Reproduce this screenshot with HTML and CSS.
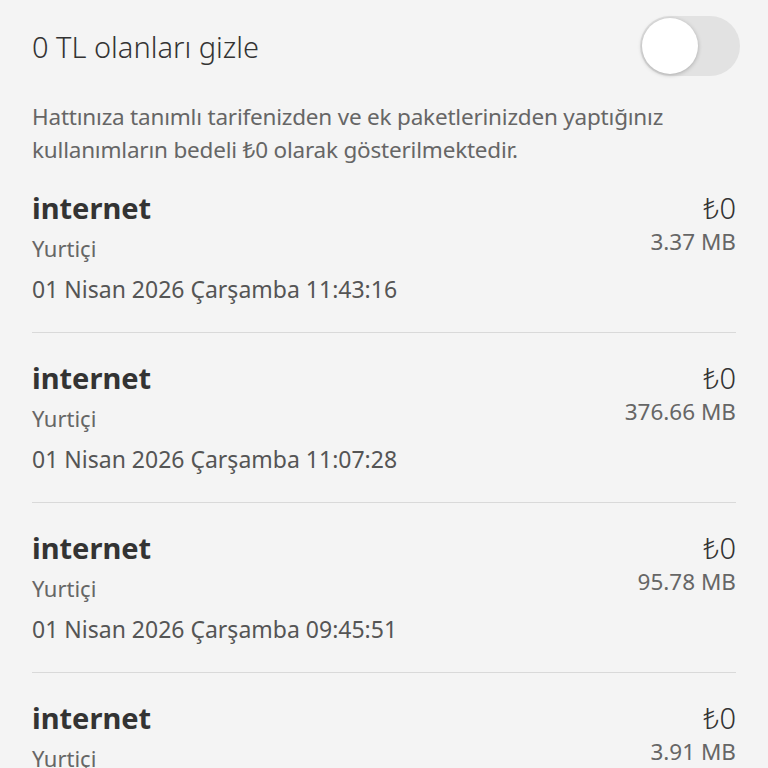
FILE: index.html
```html
<!DOCTYPE html>
<html lang="tr">
<head>
  <meta charset="UTF-8">
  <title>Kullanımlar</title>
  <link rel="stylesheet" href="styles.css">
</head>
<body>
<div class="page">
  <div class="filter">
    <span class="filter-title">0 TL olanları gizle</span>
    <span class="toggle"><span class="knob"></span></span>
  </div>
  <p class="note">Hattınıza tanımlı tarifenizden ve ek paketlerinizden yaptığınız kullanımların bedeli ₺0 olarak gösterilmektedir.</p>

  <ul class="usage">
    <li>
      <div class="info">
        <div class="name">internet</div>
        <div class="sub">Yurtiçi</div>
        <div class="date">01 Nisan 2026 Çarşamba 11:43:16</div>
      </div>
      <div class="amount">
        <div class="price">₺0</div>
        <div class="size">3.37 MB</div>
      </div>
    </li>
    <li>
      <div class="info">
        <div class="name">internet</div>
        <div class="sub">Yurtiçi</div>
        <div class="date">01 Nisan 2026 Çarşamba 11:07:28</div>
      </div>
      <div class="amount">
        <div class="price">₺0</div>
        <div class="size">376.66 MB</div>
      </div>
    </li>
    <li>
      <div class="info">
        <div class="name">internet</div>
        <div class="sub">Yurtiçi</div>
        <div class="date">01 Nisan 2026 Çarşamba 09:45:51</div>
      </div>
      <div class="amount">
        <div class="price">₺0</div>
        <div class="size">95.78 MB</div>
      </div>
    </li>
    <li>
      <div class="info">
        <div class="name">internet</div>
        <div class="sub">Yurtiçi</div>
        <div class="date">01 Nisan 2026 Çarşamba 09:12:04</div>
      </div>
      <div class="amount">
        <div class="price">₺0</div>
        <div class="size">3.91 MB</div>
      </div>
    </li>
  </ul>
</div>
</body>
</html>
```

FILE: styles.css
```css
* {
  padding: 0;
  margin: 0;
  list-style: none;
  box-sizing: border-box;
}

html, body {
  background: #f4f4f4;
  height: 100%;
  overflow: hidden;
}

body {
  font-family: "Noto Sans", "Open Sans", sans-serif;
  color: #333;
}

.page {
  padding: 16px 32px 0 32px;
}

.filter {
  display: flex;
  align-items: center;
  justify-content: space-between;
  height: 60px;
}

.filter-title {
  font-size: 29px;
  font-weight: 300;
  color: #333;
}

.toggle {
  width: 100px;
  height: 60px;
  border-radius: 30px;
  background: #e2e2e2;
  margin-right: -4px;
  display: flex;
  align-items: center;
  padding-left: 2px;
}

.knob {
  width: 56px;
  height: 56px;
  border-radius: 50%;
  background: #fff;
  box-shadow: 0 1px 4px rgba(0, 0, 0, 0.25);
}

.note {
  margin-top: 24px;
  font-size: 22.5px;
  line-height: 33px;
  color: #666;
  letter-spacing: -0.2px;
}

.usage {
  margin-top: -3px;
}

.usage li {
  display: flex;
  justify-content: space-between;
  padding: 25px 0 22px 0;
  border-bottom: 1px solid #d9d9d9;
}

.name {
  font-size: 29px;
  font-weight: bold;
  line-height: 40px;
  color: #333;
}

.sub {
  font-size: 22px;
  line-height: 40px;
  color: #666;
}

.date {
  font-size: 23px;
  line-height: 42px;
  color: #555;
}

.amount {
  text-align: right;
}

.price {
  font-size: 29px;
  font-weight: 300;
  line-height: 40px;
  color: #333;
}

.size {
  font-size: 22.5px;
  line-height: 28px;
  color: #666;
}
```
